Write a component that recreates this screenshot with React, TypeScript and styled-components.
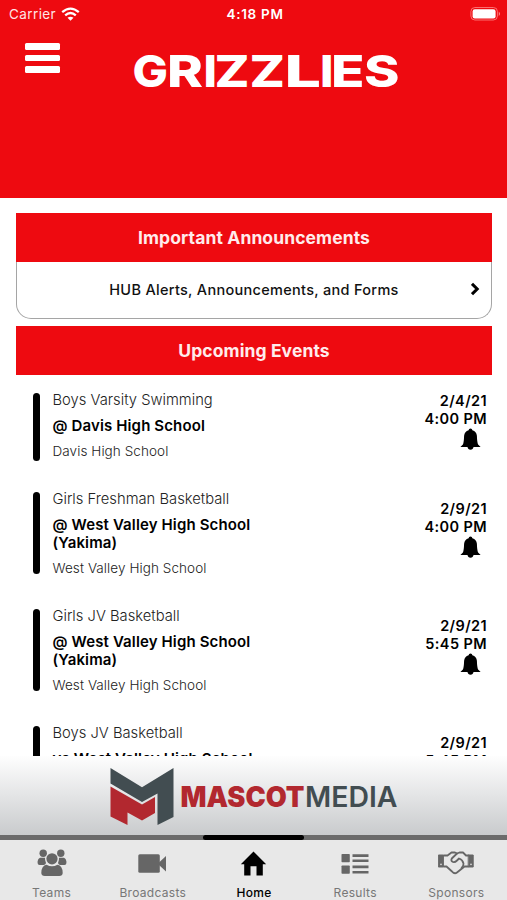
import React from "react";
import styled, { createGlobalStyle } from "styled-components";

const RED = "#ee0a10";

const GlobalStyle = createGlobalStyle`
  * { box-sizing: border-box; }
  body { margin: 0; background: #fff; font-family: Inter, "Liberation Sans", sans-serif; }
`;

const Screen = styled.div`
  width: 507px;
  height: 900px;
  display: flex;
  flex-direction: column;
  overflow: hidden;
  background: #fff;
  color: #111;
`;

const Header = styled.header`
  flex: 0 0 198px;
  background: ${RED};
  color: #fff;
`;

const StatusBar = styled.div`
  height: 28px;
  display: grid;
  grid-template-columns: 1fr auto 1fr;
  align-items: center;
  padding: 0 6px 0 9px;
  font-size: 13.5px;
`;

const Carrier = styled.div`
  display: flex;
  align-items: center;
  gap: 5px;
  color: #ffe4e4;
  letter-spacing: 0.4px;
`;

const Clock = styled.div`
  font-weight: 600;
  font-size: 13.5px;
  letter-spacing: 0.7px;
`;

const Battery = styled.svg`
  display: block;
  justify-self: end;
`;

const TitleBar = styled.div`
  display: flex;
  align-items: flex-start;
  padding: 15px 0 0 25px;
`;

const MenuButton = styled.button`
  width: 36px;
  height: 31px;
  padding: 0;
  border: 0;
  background: none;
  display: flex;
  flex-direction: column;
  gap: 5px;
`;

const MenuLine = styled.span`
  width: 35px;
  height: 6.5px;
  border-radius: 1.5px;
  background: #fff;
`;

const Wordmark = styled.svg`
  display: block;
  overflow: visible;
  margin: 0 0 0 69px;
`;

const Content = styled.main`
  flex: 0 0 558px;
  overflow: hidden;
  padding: 15px 15px 0 16px;
`;

const SectionHeading = styled.h2`
  margin: 0;
  height: 49px;
  display: flex;
  align-items: center;
  justify-content: center;
  background: ${RED};
  color: #ffecec;
  font-size: 17.5px;
  font-weight: 700;
  letter-spacing: 0.1px;
`;

const LinkCard = styled.a`
  height: 57px;
  margin-bottom: 7.4px;
  padding: 0 0 2px;
  display: grid;
  grid-template-columns: 20px 1fr 20px;
  align-items: center;
  border: 1px solid #a5a5a5;
  border-top: 0;
  border-bottom-width: 1.5px;
  border-radius: 0 0 15px 15px;
  font-size: 14.5px;
  font-weight: 500;
  letter-spacing: 0.3px;
  text-align: center;
`;

const LinkLabel = styled.span`
  grid-column: 2;
`;

const EventList = styled.div`
  padding-top: 0.6px;
`;

const EventRow = styled.article<{ $tall: boolean }>`
  height: ${(p) => (p.$tall ? 117 : 99)}px;
  display: flex;
  align-items: flex-start;
  padding: 14.6px 5px 0 16.5px;
`;

const Accent = styled.div<{ $tall: boolean }>`
  width: 7.5px;
  height: ${(p) => (p.$tall ? 82 : 68)}px;
  margin: 2px 12.5px 0 0;
  border-radius: 4px;
  background: #000;
`;

const EventText = styled.div`
  width: 215px;
  display: flex;
  flex-direction: column;
  gap: 8px;
  line-height: 18px;
`;

const Sport = styled.div`
  font-size: 14.75px;
  font-weight: 300;
  color: #222;
  white-space: nowrap;
`;

const Opponent = styled.div`
  font-size: 15px;
  font-weight: 600;
  letter-spacing: 0.13px;
  color: #000;
  white-space: pre-line;
`;

const Venue = styled.div`
  margin-top: -0.7px;
  font-size: 13.5px;
  font-weight: 300;
  letter-spacing: 0.08px;
  color: #222;
`;

const When = styled.div`
  margin-left: auto;
  align-self: center;
  display: flex;
  flex-direction: column;
  align-items: flex-end;
  padding-bottom: 22px;
  font-size: 14.5px;
  font-weight: 600;
  line-height: 18px;
  letter-spacing: 0.4px;
  color: #000;
`;

const Bell = styled.svg`
  display: block;
  margin: 0 6px 0 0;
`;

const Sponsor = styled.section`
  flex: 0 0 79px;
  display: flex;
  justify-content: center;
  background: linear-gradient(#fefefe, #c9cbcd);
`;

const SponsorLogo = styled.svg`
  display: block;
  overflow: visible;
`;

const TabStrip = styled.div`
  flex: 0 0 5px;
  background: #6b6b6b;
  display: flex;
  justify-content: center;
`;

const TabIndicator = styled.div`
  width: 101px;
  border-radius: 3px;
  background: #000;
`;

const TabBar = styled.nav`
  flex: 1;
  display: grid;
  grid-template-columns: repeat(5, 1fr);
  padding-left: 1px;
  background: #e8e8e8;
`;

const Tab = styled.a<{ $active?: boolean }>`
  display: flex;
  flex-direction: column;
  align-items: center;
  color: ${(p) => (p.$active ? "#000" : "#666")};
  font-size: 12px;
  letter-spacing: 0.3px;
  font-weight: ${(p) => (p.$active ? 500 : 400)};
`;

const TabIcon = styled.div<{ $drop: number }>`
  height: 45px;
  padding-top: ${(p) => p.$drop}px;
  display: flex;
  align-items: center;
  svg { display: block; }
`;

const TabLabel = styled.span<{ $active?: boolean }>`
  line-height: 15px;
  color: ${(p) => (p.$active ? "#000" : "#777")};
`;

const Wifi = () => (
  <svg width="19" height="14" viewBox="0 0 19 14" fill="none" stroke="#fff" strokeWidth="2.3">
    <path d="M1.2 5.2Q9.5-2 17.8 5.2" />
    <path d="M4.2 8.3Q9.5 3.6 14.8 8.3" />
    <path d="M9.5 13.8 6.5 10.8Q9.5 8.5 12.5 10.8Z" fill="#fff" stroke="none" />
  </svg>
);

const Chevron = () => (
  <svg width="10" height="14" viewBox="0 0 10 14" fill="none" stroke="#000" strokeWidth="3">
    <path d="M1 1.8 6.2 7 1 12.2" />
  </svg>
);

const TeamsIcon = () => (
  <svg width="30" height="28" viewBox="0 0 30 28" fill="currentColor">
    <circle cx="6.2" cy="4.2" r="3.7" />
    <circle cx="23.8" cy="4.2" r="3.7" />
    <path d="M3 8.8Q1 9.5.6 12.3V14q0 2 2 2H7Q8.7 15.5 9 14 7.8 11.5 8 8.8Z" />
    <path d="M27 8.8q2 .7 2.4 3.5V14q0 2-2 2H23q-1.7-.5-2-2 1.2-2.5 1-5.2Z" />
    <circle cx="15" cy="9.8" r="5.6" />
    <path d="M9.500 15.800Q4.500 16.500 4.300 24q.1 3 3.500 3h14.400q3.400 0 3.500-3-.2-7.500-5.200-8.200-5.500 3-11 0Z" />
  </svg>
);

const CameraIcon = () => (
  <svg width="29" height="19" viewBox="0 0 29 19" fill="currentColor">
    <rect width="21.5" height="18.5" x=".3" y=".2" rx="1.5" />
    <path d="M21 8.500 28 2v15.500L21 11Z" />
  </svg>
);

const HomeIcon = () => (
  <svg width="27" height="25" viewBox="0 0 27 25" fill="currentColor">
    <path d="M13.500.5 26.200 13.200h-3.400V24.400H16.500V15.200h-6V24.400H4.200V13.200H.8Z" />
  </svg>
);

const ResultsIcon = () => (
  <svg width="28" height="20" viewBox="0 0 28 20" fill="currentColor">
    <rect x=".5" width="8.3" height="8.3" rx=".8" />
    <rect x=".5" y="11.4" width="8.3" height="8.3" rx=".8" />
    <path d="M11.500.3h16v2.700h-16ZM11.500 5.400h16v2.700h-16ZM11.500 11.600h16v2.700h-16ZM11.500 16.900h16v2.700h-16Z" />
  </svg>
);

const HandshakeIcon = () => (
  <svg width="36" height="24" viewBox="0 0 36 24" fill="none" stroke="currentColor" strokeWidth="1.8" strokeLinejoin="round" strokeLinecap="round">
    <path d="M.8 4H5.400V16H.8ZM30.600 4h4.600v12h-4.600Z" fill="currentColor" strokeWidth="1" />
    <path d="M6 4.500H9.500L13.500 1.500H17L19 2.500 21.500 1.500H25L28 4.500H30.500" />
    <path d="M6 15.500H8.500L14 20.500Q16.500 23.500 19 21.500L26.500 15.500H30" />
    <path d="M19 2.500 13.800 7.500Q12.500 10 15 11 17 11.500 19 9.500L21 7.500Q24.500 8.500 25.500 12.500 25.800 14.500 23.500 17" />
    <path d="M3 13.300v.2M33 13.300v.2" stroke="#e8e8e8" strokeWidth="1.5" />
  </svg>
);

const MascotLogo = () => (
  <SponsorLogo width="290" height="79" viewBox="0 0 290 79">
    <path d="M1.500 12 33 31.200 64.500 12V61L48.500 69V37.500L33 46 1.500 27.500Z" fill="#424d51" />
    <path d="M1.500 30.500 33 48.500 46 41V57L33 64.500 18.500 56.500V69L1.500 60.500Z" fill="#b2282f" />
    <g fontFamily="Inter, sans-serif" fontSize="28.5">
      <text x="71.5" y="50.8" fontWeight="900" fill="#b2282f" textLength="124" lengthAdjust="spacingAndGlyphs">MASCOT</text>
      <text x="196" y="50.8" fontWeight="600" fill="#424d51" textLength="92.5" lengthAdjust="spacingAndGlyphs">MEDIA</text>
    </g>
  </SponsorLogo>
);

const wordmarkLetters = [
  { char: "G", x: 2.5, width: 35.5 },
  { char: "R", x: 37, width: 36 },
  { char: "I", x: 73.5, width: 13.5 },
  { char: "Z", x: 84.5, width: 35 },
  { char: "Z", x: 119.5, width: 35.5 },
  { char: "L", x: 154.5, width: 36.5 },
  { char: "I", x: 190, width: 13.5 },
  { char: "E", x: 201, width: 33.5 },
  { char: "S", x: 234, width: 35.5 },
];

const events = [
  { sport: "Boys Varsity Swimming", opponent: "@ Davis High School", venue: "Davis High School", date: "2/4/21", time: "4:00 PM", tall: false },
  { sport: "Girls Freshman Basketball", opponent: "@ West Valley High School\n(Yakima)", venue: "West Valley High School", date: "2/9/21", time: "4:00 PM", tall: true },
  { sport: "Girls JV Basketball", opponent: "@ West Valley High School\n(Yakima)", venue: "West Valley High School", date: "2/9/21", time: "5:45 PM", tall: true },
  { sport: "Boys JV Basketball", opponent: "vs West Valley High School\n(Yakima)", venue: "West Valley High School", date: "2/9/21", time: "5:45 PM", tall: true },
];

const tabs = [
  { label: "Teams", icon: <TeamsIcon />, drop: 0 },
  { label: "Broadcasts", icon: <CameraIcon />, drop: 2 },
  { label: "Home", icon: <HomeIcon />, drop: 2, active: true },
  { label: "Results", icon: <ResultsIcon />, drop: 2 },
  { label: "Sponsors", icon: <HandshakeIcon />, drop: 0 },
];

export default function App() {
  return (
    <Screen>
      <GlobalStyle />
      <Header>
        <StatusBar>
          <Carrier>Carrier <Wifi /></Carrier>
          <Clock>4:18 PM</Clock>
          <Battery width="31" height="15" viewBox="0 0 31 15">
            <rect x=".9" y=".5" width="26.5" height="12.5" rx="4" fill="none" stroke="#ff8888" strokeWidth=".8" />
            <rect x="2.6" y="2.2" width="23" height="9.2" rx="2.2" fill="#fff" />
            <path d="M28.800 4.500q2 2.300 0 4.600Z" fill="#ffaaaa" />
          </Battery>
        </StatusBar>
        <TitleBar>
          <MenuButton aria-label="Menu">
            <MenuLine /><MenuLine /><MenuLine />
          </MenuButton>
          <Wordmark width="275" height="58" viewBox="0 0 275 58">
            <text y="44" fontFamily="Inter, sans-serif" fontWeight="800" fontSize="44" fill="#fff">
              {wordmarkLetters.map((l, i) => (
                <tspan key={i} x={l.x} textLength={l.width} lengthAdjust="spacingAndGlyphs">{l.char}</tspan>
              ))}
            </text>
          </Wordmark>
        </TitleBar>
      </Header>
      <Content>
        <SectionHeading>Important Announcements</SectionHeading>
        <LinkCard>
          <LinkLabel>HUB Alerts, Announcements, and Forms</LinkLabel>
          <Chevron />
        </LinkCard>
        <SectionHeading>Upcoming Events</SectionHeading>
        <EventList>
          {events.map((e, i) => (
            <EventRow key={i} $tall={e.tall}>
              <Accent $tall={e.tall} />
              <EventText>
                <Sport>{e.sport}</Sport>
                <Opponent>{e.opponent}</Opponent>
                <Venue>{e.venue}</Venue>
              </EventText>
              <When>
                <span>{e.date}</span>
                <span>{e.time}</span>
                <Bell width="21" height="23" viewBox="0 0 21 23">
                  <path d="M10.500.5q1.700 0 1.900 1.800 4 1 4.500 5.500.2 7 1.200 8.700l2.500 2.500H.4l2.500-2.500q1-1.700 1.200-8.700.5-4.500 4.500-5.500Q8.800.5 10.500.5ZM7.400 18.800h6.200q-.6 3-3.100 3t-3.100-3Z" />
                </Bell>
              </When>
            </EventRow>
          ))}
        </EventList>
      </Content>
      <Sponsor><MascotLogo /></Sponsor>
      <TabStrip><TabIndicator /></TabStrip>
      <TabBar>
        {tabs.map((t) => (
          <Tab key={t.label} $active={t.active}>
            <TabIcon $drop={t.drop}>{t.icon}</TabIcon>
            <TabLabel $active={t.active}>{t.label}</TabLabel>
          </Tab>
        ))}
      </TabBar>
    </Screen>
  );
}
